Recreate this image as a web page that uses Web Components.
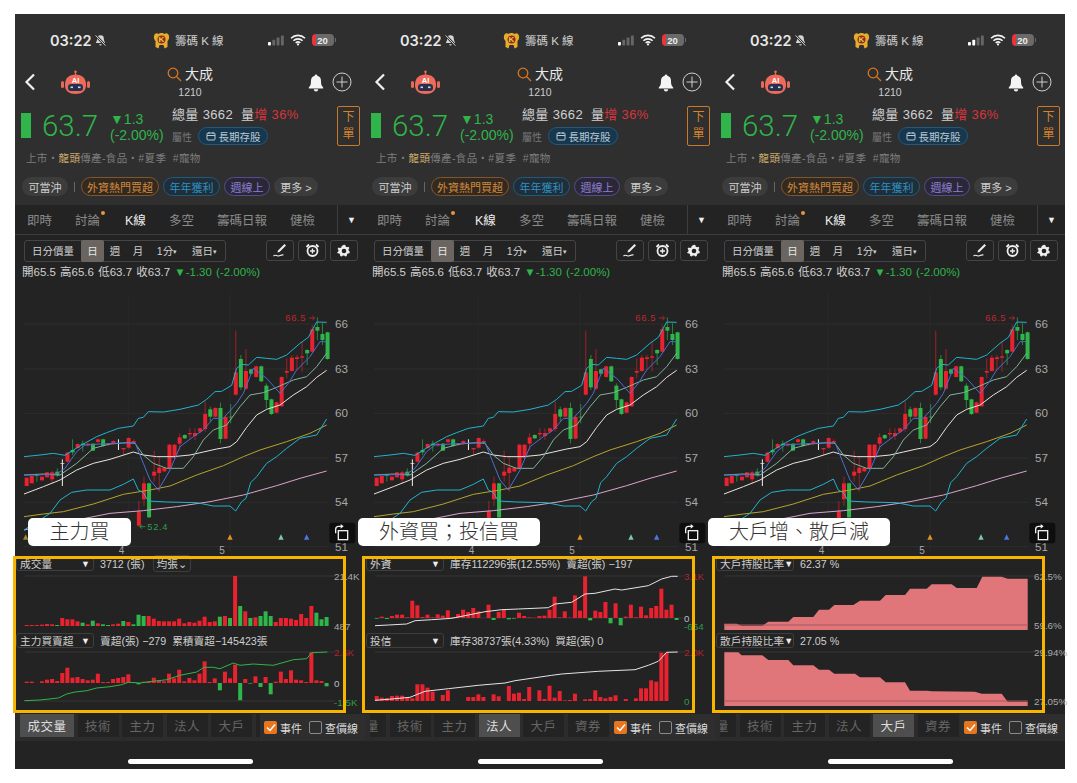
<!DOCTYPE html>
<html lang="zh-Hant">
<head>
<meta charset="utf-8">
<title>籌碼K線</title>
<style>
  html, body { margin: 0; background: #fff; }
  body { font-family: "Liberation Sans", "Noto Sans CJK TC", sans-serif; padding: 14px 0 0 15px; height: 769px; overflow: hidden; box-sizing: border-box; }
  #stage { display: flex; width: 1050px; }
</style>
</head>
<body>
<div id="stage">
  <phone-screen label="主力買" label-x="13" label-w="103" frame-x="-2" signal="1" tab="成交量" shift="0">
    <ind-pane name="成交量" info="3712 (張)" chip="均張⌄" data="vol"></ind-pane>
    <ind-pane name="主力買賣超" info="賣超(張) −279 &nbsp;累積賣超−145423張" data="main"></ind-pane>
  </phone-screen>
  <phone-screen label="外資買；投信買" label-x="-7" label-w="182" frame-x="-3" signal="1" tab="法人" shift="38">
    <ind-pane name="外資" info="庫存112296張(12.55%) &nbsp;賣超(張) −197" data="foreign"></ind-pane>
    <ind-pane name="投信" info="庫存38737張(4.33%) &nbsp;買超(張) 0" data="trust"></ind-pane>
  </phone-screen>
  <phone-screen label="大戶增、散戶減" label-x="-7" label-w="182" frame-x="-3" signal="2" tab="大戶" shift="38">
    <ind-pane name="大戶持股比率" info="62.37 %" data="big"></ind-pane>
    <ind-pane name="散戶持股比率" info="27.05 %" data="small"></ind-pane>
  </phone-screen>
</div>

<script>
// k chart data, in 3x px of the chart area
const RED = "#e8232f", GREEN = "#2fb54a";

const CANDLES = [
  [533,558,533,558,"r"],[528,550,528,550,"r"],[524,527,522,545,"g"],[530,541,530,541,"r"],
  [517,532,517,532,"r"],[517,538,512,552,"r"],[515,526,505,530,"g"],[489,491,478,558,"w"],
  [458,485,455,488,"r"],[450,457,418,465,"g"],[432,444,430,446,"r"],[431,435,422,455,"g"],
  [431,436,429,440,"r"],[431,452,429,453,"g"],[418,426,416,430,"r"],[418,438,416,440,"g"],
  [431,434,430,438,"r"],[423,431,421,434,"r"],[430,432,418,450,"w"],[444,448,444,465,"r"],
  [414,443,412,446,"r"],[423,428,418,430,"r"],[634,677,603,680,"r"],[550,598,530,618,"r"],
  [550,652,548,654,"g"],[515,527,452,545,"r"],[503,519,470,575,"r"],[503,514,502,516,"r"],
  [434,505,432,507,"r"],[434,473,432,476,"r"],[412,431,400,450,"r"],[405,415,403,417,"g"],
  [399,403,385,415,"r"],[399,408,385,420,"r"],[385,395,383,400,"r"],[342,387,305,395,"r"],
  [328,350,320,365,"g"],[324,350,322,352,"r"],[324,417,308,430,"g"],[351,416,345,418,"r"],
  [350,352,312,370,"g"],[217,284,92,287,"r"],[177,262,165,270,"g"],[213,266,147,270,"r"],
  [208,221,206,223,"g"],[199,231,197,233,"r"],[199,244,197,246,"g"],[257,300,250,325,"g"],
  [298,342,296,345,"g"],[307,338,305,340,"r"],[231,319,229,321,"r"],[213,218,175,235,"r"],
  [173,213,165,215,"r"],[172,177,165,210,"r"],[169,173,125,215,"r"],[150,160,148,195,"g"],
  [88,155,75,157,"r"],[81,92,52,120,"g"],[102,120,70,135,"g"],[97,177,95,179,"g"]
];

const LINES = [
  ["#d9a3cf", "42,690 100,678 200,660 300,640 400,632 500,620 600,605 700,585 800,557 870,535 950,513"],
  ["#b5a32e", "42,650 100,642 160,635 250,612 340,583 420,570 480,558 560,525 640,497 700,470 750,450 830,425 900,400 950,375"],
  ["#e9e6df", "42,582 100,560 150,540 200,510 250,490 300,478 370,456 400,465 440,470 490,470 540,465 580,456 620,447 660,440 680,425 710,382 740,345 770,328 810,315 850,285 890,260 920,232 950,211"],
  ["#7fb49b", "42,525 100,522 150,525 200,490 250,445 300,432 350,428 375,430 400,465 430,490 470,505 520,505 550,470 580,420 610,390 650,375 690,320 720,285 760,278 800,262 850,240 890,230 920,200 950,160"],
  ["#4b6fd0", "42,525 80,525 140,522 165,505 200,455 225,435 270,432 320,430 375,428 400,490 420,540 445,570 480,510 510,440 550,410 580,390 610,355 640,355 680,310 700,280 730,205 770,235 810,280 835,250 860,210 900,170 930,125 950,125"],
  ["#1fb4d0", "42,470 90,465 130,460 165,466 190,450 220,432 260,410 290,398 325,385 370,378 385,355 400,352 415,335 460,336 510,328 565,315 590,298 615,275 635,274 665,256 680,205 695,193 715,195 740,172 770,175 800,178 830,165 870,130 895,112 920,66 950,67"],
  ["#1fb4d0", "42,690 90,660 120,640 150,600 185,577 230,570 300,570 340,553 370,537 385,570 400,578 415,603 470,606 560,608 610,618 660,618 677,633 695,605 708,595 722,548 740,530 770,490 800,470 830,445 870,415 920,405 950,357"]
];

const xf = (pts, dx, dy) => pts.split(" ").map(p => {
  const [x, y] = p.split(",").map(Number);
  return `${(x / 3 + dx).toFixed(1)},${(y / 3 + dy).toFixed(1)}`;
}).join(" ");

// indicator panes: bars are signed heights in 3x px, positive red, negative green
const PANES = {
  vol: { h: 62, grid: [4], base: 54, up: true,
    bars: [3,3,3,4,6,5,-3,24,20,20,14,-10,5,-16,8,-5,-3,5,7,-15,12,-5,-34,-30,30,22,15,14,14,14,22,8,12,10,16,28,12,14,-28,30,-24,150,-60,44,-24,26,-30,-44,-30,12,24,24,22,18,36,24,60,-40,-20,-27],
    labels: [["21.4K","#aaa",4],["487","#aaa",54]] },
  main: { h: 61, grid: [3,52], base: 34,
    bars: [4,4,0,5,10,12,6,30,46,16,18,12,8,10,28,3,3,12,15,18,26,2,-4,4,5,16,8,5,28,14,40,5,15,8,28,65,3,14,-22,34,14,55,-52,12,-2,20,-12,18,-34,4,34,12,38,10,8,3,92,8,6,-10],
    line: [GREEN, xf("73,218 120,216 175,210 200,198 225,192 260,188 290,180 330,176 365,170 385,163 420,165 460,160 500,155 540,142 590,132 612,118 640,118 660,122 700,105 720,112 760,108 820,112 880,95 920,92 935,74 982,72", -15, -21)],
    labels: [["2.6K","#b3262c",3],["0","#bbb",34],["-1.5K","#2f9c49",53]] },
  foreign: { h: 62, grid: [4,46], base: 46,
    bars: [-2,4,-3,6,10,10,2,52,38,3,10,2,11,7,23,3,12,25,18,30,20,0,40,-6,18,26,-4,-2,16,6,2,1,6,7,25,64,2,20,1,68,22,125,-7,22,18,48,-16,44,-22,4,40,2,34,8,30,36,88,25,40,-6],
    line: ["#e4e4e4", xf("60,230 100,228 155,225 180,215 230,212 290,208 340,198 390,188 440,182 490,180 580,176 600,165 650,160 690,135 720,133 780,120 800,123 880,110 920,90 950,82 968,82", -10, -23)],
    labels: [["3.1K","#b3262c",4],["0","#bbb",46],["-664","#2f9c49",54]] },
  trust: { h: 61, grid: [3], base: 52,
    bars: [15,10,9,15,16,16,10,8,50,50,40,28,0,18,32,0,0,0,12,12,20,12,0,20,14,0,45,22,25,6,42,0,32,6,46,10,30,2,3,22,0,5,6,32,12,8,12,17,0,6,0,8,38,38,62,58,145,145,0,0],
    line: ["#e4e4e4", xf("60,457 100,454 165,448 210,430 280,422 370,412 450,405 480,398 590,382 620,378 730,370 840,365 880,352 910,340 935,313 968,312", -10, -101)],
    labels: [["2.0K","#b3262c",3],["0","#2f9c49",52]] },
  big: { h: 62, grid: [4],
    area: xf("58,224 95,224 110,230 172,230 190,218 250,218 265,204 325,204 342,182 372,182 388,168 445,168 465,155 525,155 542,138 600,138 615,119 665,119 680,106 740,106 755,117 815,117 832,83 890,83 908,89 968,89", -10, -23),
    floor: 58, mark: 53, x0: 9.3, x1: 312.7,
    labels: [["62.5%","#aaa",4],["59.6%","#aaa",53]] },
  small: { h: 61, grid: [3],
    area: xf("58,313 100,313 110,322 172,322 190,336 250,336 265,352 325,352 342,365 372,365 388,377 450,377 465,388 525,388 542,403 600,403 615,428 665,428 680,430 810,431 830,437 890,437 908,461 968,461", -10, -101),
    floor: 57, mark: 52, x0: 9.3, x1: 312.7,
    labels: [["29.94%","#aaa",3],["27.05%","#aaa",52]] }
};

class StatusBar extends HTMLElement {
  constructor() {
    super();
    this.attachShadow({ mode: "open" });
  }

  connectedCallback() {
    const on = Number(this.getAttribute("signal") || 1);
    const bars = [0, 1, 2, 3].map(i =>
      `<rect x="${i * 4.3}" y="${7 - i * 2.2}" width="2.9" height="${3.4 + i * 2.2}" rx=".7" fill="${i < on ? "#fff" : "#666"}"/>`
    ).join("");
    this.shadowRoot.innerHTML = `
      <style>
        :host { display: flex; align-items: center; height: 48px; padding-top: 4px; box-sizing: border-box; color: #f2f2f2; }
        .time { margin-left: 35px; width: 41px; font: 600 14.5px Inter, sans-serif; color: #e8e8e8; white-space: nowrap; }
        .mute { margin-left: 3px; }
        .app { display: flex; align-items: center; margin-left: 46px; gap: 5px; font-size: 11.5px; color: #cfcfcf; }
        .sys { display: flex; align-items: center; margin-left: 44px; gap: 6px; }
        .batt { position: relative; display: flex; align-items: center; width: 22px; height: 12px; border-radius: 4px; font-size: 9.5px; font-weight: 700; justify-content: center; color: #eee;
                background: linear-gradient(90deg, #e8343a 0 18%, #6a6a6a 18%); }
        .batt::after { content: ""; position: absolute; right: -2px; top: 4px; width: 1px; height: 4px; background: #6a6a6a; }
      </style>
      <span class="time">03:22</span>
      <svg class="mute" width="13" height="13" viewBox="0 0 13 13"><path d="M6.5 1.2a3.2 3.2 0 0 0-3.3 3.2c0 2.8-1.4 3.8-1.4 4.600h9.4c0-.8-1.4-1.8-1.4-4.600a3.2 3.2 0 0 0-3.3-3.2zM5.2 10.2h2.600a1.3 1.3 0 0 1-2.600 0z" fill="#d5d5d5"/><path d="M1.600 1.400l9.800 10.200" stroke="#2f2f2f" stroke-width="2.400"/><path d="M1.600 1.400l9.800 10.200" stroke="#d5d5d5" stroke-width="1"/></svg>
      <span class="app">
        <svg width="17" height="17" viewBox="0 0 17 17"><path d="M1 4C1.500 1 4 .5 5.500 2 6.500.5 10.500.5 11.500 2 13 .5 15.500 1 16 4c.5 2.500-.5 4-1.500 5v6l-3 1.500L10.500 13h-4l-1 3.500-3-1.500V9C1.500 8 .5 6.500 1 4z" fill="#e6ac2e"/><circle cx="8.500" cy="7.500" r="4" fill="#8a2c1e"/><text x="8.500" y="10.300" font-size="8" font-weight="700" text-anchor="middle" fill="#f4c83c" font-family="Liberation Sans">K</text></svg>
        <span>籌碼 K 線</span>
      </span>
      <span class="sys">
        <svg width="16" height="11" viewBox="0 0 16 11">${bars}</svg>
        <svg width="16" height="12" viewBox="0 0 16 12"><path d="M1 4.200a10 10 0 0 1 14 0M3.400 6.700a6.600 6.600 0 0 1 9.200 0M5.700 9a3.300 3.300 0 0 1 4.600 0" fill="none" stroke="#f2f2f2" stroke-width="1.600"/><circle cx="8" cy="10.400" r="1.100" fill="#f2f2f2"/></svg>
        <span class="batt">20</span>
      </span>
    `;
  }
}

class StockHead extends HTMLElement {
  constructor() {
    super();
    this.attachShadow({ mode: "open" });
  }

  connectedCallback() {
    this.shadowRoot.innerHTML = `
      <style>
        :host { display: block; color: #ddd; }
        .nav { display: grid; grid-template-columns: 1fr auto 1fr; align-items: center; height: 40px; }
        .left { display: flex; align-items: center; padding-left: 8px; gap: 23px; }
        .mid { text-align: center; line-height: 1; }
        .name { display: flex; align-items: center; justify-content: center; gap: 3px; font-size: 14px; color: #e8e8e8; }
        .code { font-size: 10.5px; margin-top: 5px; color: #ccc; }
        .right { display: flex; justify-content: flex-end; align-items: center; gap: 7px; padding-right: 13px; }
        .quote { display: flex; align-items: center; height: 45px; padding-left: 6px; margin-top: 1px; }
        .bar { width: 10px; height: 25px; background: #2fb54a; margin-right: 11px; }
        .price { width: 68px; font: 300 29.500px Roboto, sans-serif; color: #2fb54a; }
        .chg { width: 62px; font-size: 14px; line-height: 16px; color: #2fb54a; margin-top: 2px; }
        .chg b { font-weight: 400; }
        .info { flex: 1; font-size: 13px; color: #cfcfcf; }
        .info .l1 { letter-spacing: .35px; margin-top: -2px; }
        .up { color: #d8353e; }
        .l2 { display: flex; align-items: center; gap: 6px; margin-top: 4px; font-size: 10px; color: #777; }
        .pill { display: flex; align-items: center; justify-content: center; gap: 3px; width: 70px; box-sizing: border-box; height: 18px; border: 1px solid #1e5a7d; border-radius: 9px; background: #16374d; color: #b8c8d4; font-size: 10.500px; }
        .order { width: 23px; height: 40px; margin-right: 5px; box-sizing: border-box; border: 1px solid #c77a2e; border-radius: 2px; color: #d9822b; font-size: 12px; line-height: 17px; text-align: center; display: flex; align-items: center; justify-content: center; }
        .meta { padding-left: 11px; height: 20px; line-height: 20px; font-size: 10.500px; color: #7e7e7e; letter-spacing: .35px; }
        .meta em { font-style: normal; color: #cfae6b; }
      </style>
      <div class="nav">
        <div class="left">
          <svg width="14" height="20" viewBox="0 0 14 20"><path d="M11 2.500L3.500 10l7.500 7.500" fill="none" stroke="#f0f0f0" stroke-width="2.200"/></svg>
          <svg width="31" height="25" viewBox="0 0 31 25"><line x1="15.500" y1="1.500" x2="15.500" y2="5" stroke="#e8685a" stroke-width="1.200"/><circle cx="15.500" cy="1.800" r="1.300" fill="#e8685a"/><rect x="1" y="11" width="3" height="7" rx="1.500" fill="#e8685a"/><rect x="27" y="11" width="3" height="7" rx="1.500" fill="#e8685a"/><path d="M5 15c0-7 4-10.500 10.500-10.500S26 8 26 15c0 6-4 9-10.500 9S5 21 5 15z" fill="#ee6b5c"/><rect x="8" y="14" width="15" height="7" rx="3" fill="#26304a"/><rect x="10.500" y="16.500" width="2.500" height="1.600" fill="#c8d4ee"/><rect x="18" y="16.500" width="2.500" height="1.600" fill="#c8d4ee"/><text x="15.500" y="12.500" font-size="7.500" font-weight="700" text-anchor="middle" fill="#fff" font-family="Liberation Sans">AI</text></svg>
        </div>
        <div class="mid">
          <div class="name">
            <svg width="15" height="15" viewBox="0 0 15 15"><circle cx="6" cy="6" r="4.800" fill="none" stroke="#d9761f" stroke-width="1.300"/><path d="M9.500 9.500l4.500 4.500" stroke="#d9761f" stroke-width="1.300"/></svg>
            <span>大成</span>
          </div>
          <div class="code">1210</div>
        </div>
        <div class="right">
          <svg width="18" height="19" viewBox="0 0 18 19"><path d="M9 1.500a1.300 1.300 0 0 1 1.300 1.300A5 5 0 0 1 14 7.700c0 4 .7 5 2.200 6.700v1H1.800v-1C3.300 12.700 4 11.700 4 7.700A5 5 0 0 1 7.700 2.800 1.300 1.300 0 0 1 9 1.500zM6.800 16.300h4.400a2.200 2.200 0 0 1-4.400 0z" fill="#f4f4f4"/></svg>
          <svg width="20" height="20" viewBox="0 0 20 20"><circle cx="10" cy="10" r="9" fill="none" stroke="#cfcfcf" stroke-width="1"/><path d="M10 4.500v11M4.500 10h11" stroke="#cfcfcf" stroke-width="1"/></svg>
        </div>
      </div>
      <div class="quote">
        <span class="bar"></span>
        <span class="price">63.7</span>
        <span class="chg"><b>▼1.3</b><br>(-2.00%)</span>
        <div class="info">
          <div class="l1">總量 3662 &nbsp;量<span class="up">增 36%</span></div>
          <div class="l2">屬性
            <span class="pill">
              <svg width="10" height="10" viewBox="0 0 10 10"><rect x="1" y="2" width="8" height="7" rx="1" fill="none" stroke="#b8c8d4"/><path d="M1 4.500h8M3 1v2M7 1v2" stroke="#b8c8d4"/></svg>長期存股</span>
          </div>
        </div>
        <span class="order">下<br>單</span>
      </div>
      <div class="meta">上市・<em>龍頭</em>傳產-食品・#夏季 &nbsp;#寵物</div>
    `;
  }
}

class TagRow extends HTMLElement {
  constructor() {
    super();
    this.attachShadow({ mode: "open" });
  }

  connectedCallback() {
    this.shadowRoot.innerHTML = `
      <style>
        :host { display: flex; align-items: center; gap: 4px; height: 37px; padding: 0 0 0 7px; box-sizing: border-box; font-size: 11px; }
        span { display: flex; align-items: center; justify-content: center; height: 19px; border-radius: 10px; border: 1px solid transparent; white-space: nowrap; box-sizing: border-box; }
        .plain { background: #3c3c3c; color: #cfcfcf; }
        .sep { height: 10px; width: 1px; border: 0; border-radius: 0; background: #666; margin: 0 2px; }
        .o { border-color: #80562f; color: #d08a3e; background: #33291f; }
        .b { border-color: #1f5a7a; color: #2f8fc0; background: #1f2e38; }
        .p { border-color: #584a8c; color: #8e7fd0; background: #2a2838; }
      </style>
      <span class="plain" style="width:46px">可當沖</span>
      <span class="sep"></span>
      <span class="o" style="width:78px">外資熱門買超</span>
      <span class="b" style="width:57px">年年獲利</span>
      <span class="p" style="width:46px">週線上</span>
      <span class="plain" style="width:44px">更多 &gt;</span>
    `;
  }
}

class FuncTabs extends HTMLElement {
  constructor() {
    super();
    this.attachShadow({ mode: "open" });
  }

  connectedCallback() {
    this.shadowRoot.innerHTML = `
      <style>
        :host { display: flex; align-items: center; gap: 23px; height: 30px; padding-left: 12px; box-sizing: border-box; background: #232323; border-bottom: 1px solid #3d3d3d; font-size: 12.500px; color: #8a8a8a; position: relative; }
        .on { color: #eee; margin-left: 2px; }
        .dot { position: relative; }
        .dot::after { content: ""; position: absolute; right: -5px; top: 1px; width: 4px; height: 4px; border-radius: 50%; background: #e8963a; }
        .more { position: absolute; right: 0; top: 0; bottom: 0; width: 27px; border-left: 1px solid #3d3d3d; display: flex; align-items: center; justify-content: center; color: #eee; font-size: 9px; }
      </style>
      <span>即時</span><span class="dot">討論</span><span class="on">K線</span><span>多空</span><span>籌碼日報</span><span>健檢</span>
      <span class="more">▼</span>
    `;
  }
}

class ChartTools extends HTMLElement {
  constructor() {
    super();
    this.attachShadow({ mode: "open" });
  }

  connectedCallback() {
    this.shadowRoot.innerHTML = `
      <style>
        :host { display: flex; align-items: center; height: 31px; padding: 0 7px 0 9px; box-sizing: border-box; background: #232323; font-size: 10.500px; color: #cfcfcf; }
        .seg { display: flex; align-items: center; width: 202px; height: 22px; border: 1px solid #444; border-radius: 3px; box-sizing: border-box; }
        .seg span { text-align: center; white-space: nowrap; }
        .seg small { font-size: 7px; vertical-align: 1px; }
        .seg .sel { background: #6a6560; height: 22px; line-height: 22px; border-radius: 2px; color: #e8e8e8; }
        .tools { display: flex; gap: 4px; margin-left: auto; }
        .tools div { width: 28px; height: 21px; border: 1px solid #444; border-radius: 3px; box-sizing: border-box; display: flex; align-items: center; justify-content: center; }
      </style>
      <div class="seg">
        <span style="width:56px">日分價量</span>
        <span class="sel" style="width:23px">日</span>
        <span style="width:22px">週</span>
        <span style="width:24px">月</span>
        <span style="width:34px">1分<small>▾</small></span>
        <span style="width:41px">還日<small>▾</small></span>
      </div>
      <div class="tools">
        <div><svg width="16" height="15" viewBox="0 0 16 15"><path d="M12.500 1L14 2.500 7.500 9 5.500 9.500 6 7.500z" fill="#eee"/><path d="M1.500 13c2-2 3 .5 5 0s3-1.500 5-1" fill="none" stroke="#eee" stroke-width="1.100"/></svg></div>
        <div><svg width="15" height="15" viewBox="0 0 15 15"><circle cx="7.500" cy="8" r="5" fill="none" stroke="#eee" stroke-width="1.800"/><path d="M1.500 4l2.500-2.500M13.500 4L11 1.500" stroke="#eee" stroke-width="1.800"/><path d="M7.500 5.500V10.500M5 8h5" stroke="#eee" stroke-width="1.400"/></svg></div>
        <div><svg width="14" height="14" viewBox="0 0 14 14"><path d="M7 .8l1.300.3.4 1.500 1.200.6 1.500-.5 1 1.300-.9 1.300.2 1.400 1.200 1-.5 1.500-1.600.2-.9 1-.1 1.600-1.500.5-1.100-1.100H5.800l-1.100 1.100-1.500-.5-.1-1.600-.9-1-1.600-.2L.1 8.500l1.200-1 .2-1.400-.9-1.300 1-1.300 1.500.5 1.200-.6.400-1.500z" fill="#eee"/><circle cx="7" cy="7" r="2.300" fill="#232323"/></svg></div>
      </div>
    `;
  }
}

class KChart extends HTMLElement {
  constructor() {
    super();
    this.attachShadow({ mode: "open" });
  }

  connectedCallback() {
    const grid = [72, 207, 340, 474, 607, 740].map(y => `<line x1="42" x2="955" y1="${y}" y2="${y}" stroke="#333" stroke-width="2"/>`).join("");
    const vgrid = [355, 660].map(x => `<line x1="${x}" x2="${x}" y1="-20" y2="755" stroke="#2e2e2e" stroke-width="2"/>`).join("");
    const axis = [[66, 72], [63, 207], [60, 340], [57, 474], [54, 607], [51, 740]].map(([t, y]) =>
      `<text x="975" y="${y + 12}" font-size="35" fill="#a8a8a8">${t}</text>`).join("");
    const candles = CANDLES.map((c, i) => {
      const x = 50 + i * 15.3;
      const col = c[4] === "r" ? RED : c[4] === "g" ? GREEN : "#f2f2f2";
      const wick = c[4] === "r" ? "#b4232b" : c[4] === "g" ? "#2a9a41" : "#f2f2f2";
      return `<line x1="${x}" x2="${x}" y1="${c[2]}" y2="${c[3]}" stroke="${wick}" stroke-width="${c[4] === "w" ? 3 : 2.500}"/>
        <rect x="${x - 6}" y="${c[0]}" width="12" height="${c[1] - c[0]}" fill="${col}"/>`;
    }).join("");
    const lines = LINES.map(([col, pts]) => `<polyline points="${pts}" fill="none" stroke="${col}" stroke-width="3"/>`).join("");
    const tri = [[47, "#a08a2a"], [660, "#e0941e"], [813, "#7ec8a8"], [890, "#4a78e0"]].map(([x, col]) =>
      `<path d="M${x} 703l8 16h-16z" fill="${col}"/>`).join("");
    this.shadowRoot.innerHTML = `
      <style>
        :host { display: block; position: relative; z-index: 1; height: 267px; background: #232323; }
        svg { display: block; overflow: visible; font-family: "Liberation Sans", sans-serif; }
      </style>
      <svg width="350" height="267" viewBox="15 -45 1050 801">
        ${grid}${vgrid}${candles}${lines}${axis}${tri}
        <text x="826" y="62" font-size="28" letter-spacing="2" fill="#c2262e">66.5</text>
        <path d="M897 54h16M907 48l7 6-7 6" fill="none" stroke="#c2262e" stroke-width="2.500"/>
        <path d="M406 680h-16M396 674l-7 6 7 6" fill="none" stroke="#2f9c49" stroke-width="2.500"/>
        <text x="412" y="690" font-size="28" letter-spacing="2" fill="#2f9c49">52.4</text>
        <text x="326" y="762" font-size="30" fill="#a8a8a8">4</text>
        <text x="628" y="762" font-size="30" fill="#a8a8a8">5</text>
        <rect x="958" y="668" width="78" height="62" rx="9" fill="#0e0e0e"/>
        <rect x="985" y="692" width="28" height="27" fill="none" stroke="#f0f0f0" stroke-width="4"/>
        <path d="M977 700v-12a9 9 0 0 1 9-9h8" fill="none" stroke="#f0f0f0" stroke-width="4"/>
        <path d="M992 672l9 7-9 7z" fill="#f0f0f0"/>
      </svg>
    `;
  }
}

class IndPane extends HTMLElement {
  constructor() {
    super();
    this.attachShadow({ mode: "open" });
  }

  drawChart(d) {
    let body = d.grid.map(y => `<line x1="10" x2="320" y1="${y}" y2="${y}" stroke="#363636"/>`).join("");
    if (d.bars) {
      body += d.bars.map((v, i) => {
        const x = 9.7 + i * 5.083;
        const h = Math.abs(v) / 3;
        const y = d.up || v > 0 ? d.base - h : d.base;
        return `<rect x="${x.toFixed(2)}" y="${y.toFixed(2)}" width="4" height="${h.toFixed(2)}" fill="${v > 0 ? RED : GREEN}"/>`;
      }).join("");
    }
    if (d.line) {
      body += `<polyline points="${d.line[1]}" fill="none" stroke="${d.line[0]}" stroke-width="1"/>`;
    }
    if (d.area) {
      body += `<polygon points="${d.x0},${d.floor} ${d.area} ${d.x1},${d.floor}" fill="#e0757a"/>
        <line x1="${d.x0}" x2="${d.x1}" y1="${d.mark}" y2="${d.mark}" stroke="#a65a60"/>`;
    }
    body += d.labels.map(([t, col, y]) => `<text x="319" y="${y + 3.500}" font-size="9.800" fill="${col}">${t}</text>`).join("");
    return `<svg width="350" height="${d.h}" viewBox="0 0 350 ${d.h}">${body}</svg>`;
  }

  connectedCallback() {
    const d = PANES[this.getAttribute("data")];
    const chip = this.getAttribute("chip");
    this.shadowRoot.innerHTML = `
      <style>
        :host { display: block; }
        .head { display: flex; align-items: center; height: 15px; margin-top: -1px; margin-bottom: 1px; font-size: 10.700px; color: #cfcfcf; padding-left: 1px; white-space: nowrap; }
        .sel { display: flex; justify-content: space-between; align-items: center; box-sizing: border-box; width: 78px; height: 15px; padding: 0 3px; border: 1px solid #3e3e3e; border-radius: 3px; margin-right: 6px; }
        .sel i { font-style: normal; font-size: 9px; color: #eee; }
        .chip { margin-left: 8px; padding: 0 3px; border: 1px solid #3e3e3e; border-radius: 3px; }
        svg { display: block; overflow: visible; font-family: "Liberation Sans", sans-serif; }
      </style>
      <div class="head">
        <span class="sel"><span>${this.getAttribute("name")}</span><i>▼</i></span>
        <span>${this.getAttribute("info")}</span>
        ${chip ? `<span class="chip">${chip}</span>` : ""}
      </div>
      ${this.drawChart(d)}
    `;
  }
}

class BottomTabs extends HTMLElement {
  constructor() {
    super();
    this.attachShadow({ mode: "open" });
  }

  connectedCallback() {
    const active = this.getAttribute("tab");
    const shift = Number(this.getAttribute("shift") || 0);
    // scrolled row: only the end of the first tab shows, and the last tab is out of view when not scrolled
    const tabs = ["成交量", "技術", "主力", "法人", "大戶", "資券"].map(t => {
      if (t === "成交量") {
        return `<span class="tab first ${t === active ? "on" : ""}">${shift ? "量" : t}</span>`;
      }
      return `<span class="tab ${t === active ? "on" : ""}">${t === "資券" && !shift ? "" : t}</span>`;
    }).join("");
    this.shadowRoot.innerHTML = `
      <style>
        :host { display: flex; height: 27px; background: #2c2c2c; font-size: 12.500px; }
        .scroll { width: 240px; margin-left: 5px; overflow: hidden; flex: none; }
        .inner { display: flex; gap: 3.500px; height: 27px; margin-left: -${shift}px; }
        .tab { flex: none; width: 41px; height: 24px; margin-top: -1px; display: flex; align-items: center; justify-content: center; background: #232323; color: #666; letter-spacing: .5px; }
        .tab.first { width: 54px; justify-content: ${shift ? "flex-end" : "center"}; padding-right: ${shift ? 7 : 0}px; box-sizing: border-box; }
        .tab.on { background: #4e4e4e; color: #ddd; }
        .opt { flex: 1; display: flex; align-items: center; padding-left: 4px; color: #ddd; font-size: 11px; white-space: nowrap; background: #2e2e2e; }
        .box { width: 13px; height: 13px; border-radius: 2px; margin-right: 3px; flex: none; box-sizing: border-box; display: flex; align-items: center; justify-content: center; }
        .chk { background: #e8761e; }
        .off { border: 1px solid #8a8a8a; margin-left: 7px; }
      </style>
      <div class="scroll"><div class="inner">${tabs}</div></div>
      <div class="opt">
        <span class="box chk"><svg width="10" height="9" viewBox="0 0 10 9"><path d="M1 4.500l3 3 5-6" fill="none" stroke="#fff" stroke-width="1.500"/></svg></span>事件
        <span class="box off"></span>查價線
      </div>
    `;
  }
}

class PhoneScreen extends HTMLElement {
  constructor() {
    super();
    this.attachShadow({ mode: "open" });
  }

  connectedCallback() {
    const g = n => this.getAttribute(n);
    this.shadowRoot.innerHTML = `
      <style>
        :host { display: flex; flex-direction: column; width: 350px; height: 758px; flex: none; background: #2f2f2f; position: relative; color: #ddd; }
        .ohlc { height: 19px; background: #232323; font-size: 11.500px; color: #d0d0d0; padding-left: 7px; line-height: 12px; word-spacing: 1px; white-space: nowrap; }
        .ohlc span { color: #2fb54a; }
        .panes { height: 157px; padding-top: 5px; background: #232323; flex: none; }
        .foot { flex: 1; background: #232323; display: flex; justify-content: center; align-items: flex-start; }
        .home { width: 125px; height: 5px; margin-top: 18px; background: #fff; border-radius: 3px; }
        .frame { position: absolute; z-index: 2; top: 542px; left: ${g("frame-x")}px; width: 333px; height: 157px; box-sizing: border-box; border: 3px solid #f7b500; pointer-events: none; }
        .label { position: absolute; top: 504px; left: ${g("label-x")}px; width: ${g("label-w")}px; height: 28px; border-radius: 5px; background: #fff; color: #333; font-size: 20px; font-weight: 300; line-height: 28px; text-align: center; z-index: 2; white-space: nowrap; }
      </style>
      <status-bar signal="${g("signal")}"></status-bar>
      <stock-head></stock-head>
      <tag-row></tag-row>
      <func-tabs></func-tabs>
      <chart-tools></chart-tools>
      <div class="ohlc">開65.5 高65.6 低63.7 收63.7 <span>▼-1.30 (-2.00%)</span></div>
      <k-chart></k-chart>
      <div class="panes"><slot></slot></div>
      <bottom-tabs tab="${g("tab")}" shift="${g("shift")}"></bottom-tabs>
      <div class="foot"><div class="home"></div></div>
      <div class="frame"></div>
      <div class="label">${g("label")}</div>
    `;
  }
}

customElements.define("status-bar", StatusBar);
customElements.define("stock-head", StockHead);
customElements.define("tag-row", TagRow);
customElements.define("func-tabs", FuncTabs);
customElements.define("chart-tools", ChartTools);
customElements.define("k-chart", KChart);
customElements.define("ind-pane", IndPane);
customElements.define("bottom-tabs", BottomTabs);
customElements.define("phone-screen", PhoneScreen);
</script>
</body>
</html>
